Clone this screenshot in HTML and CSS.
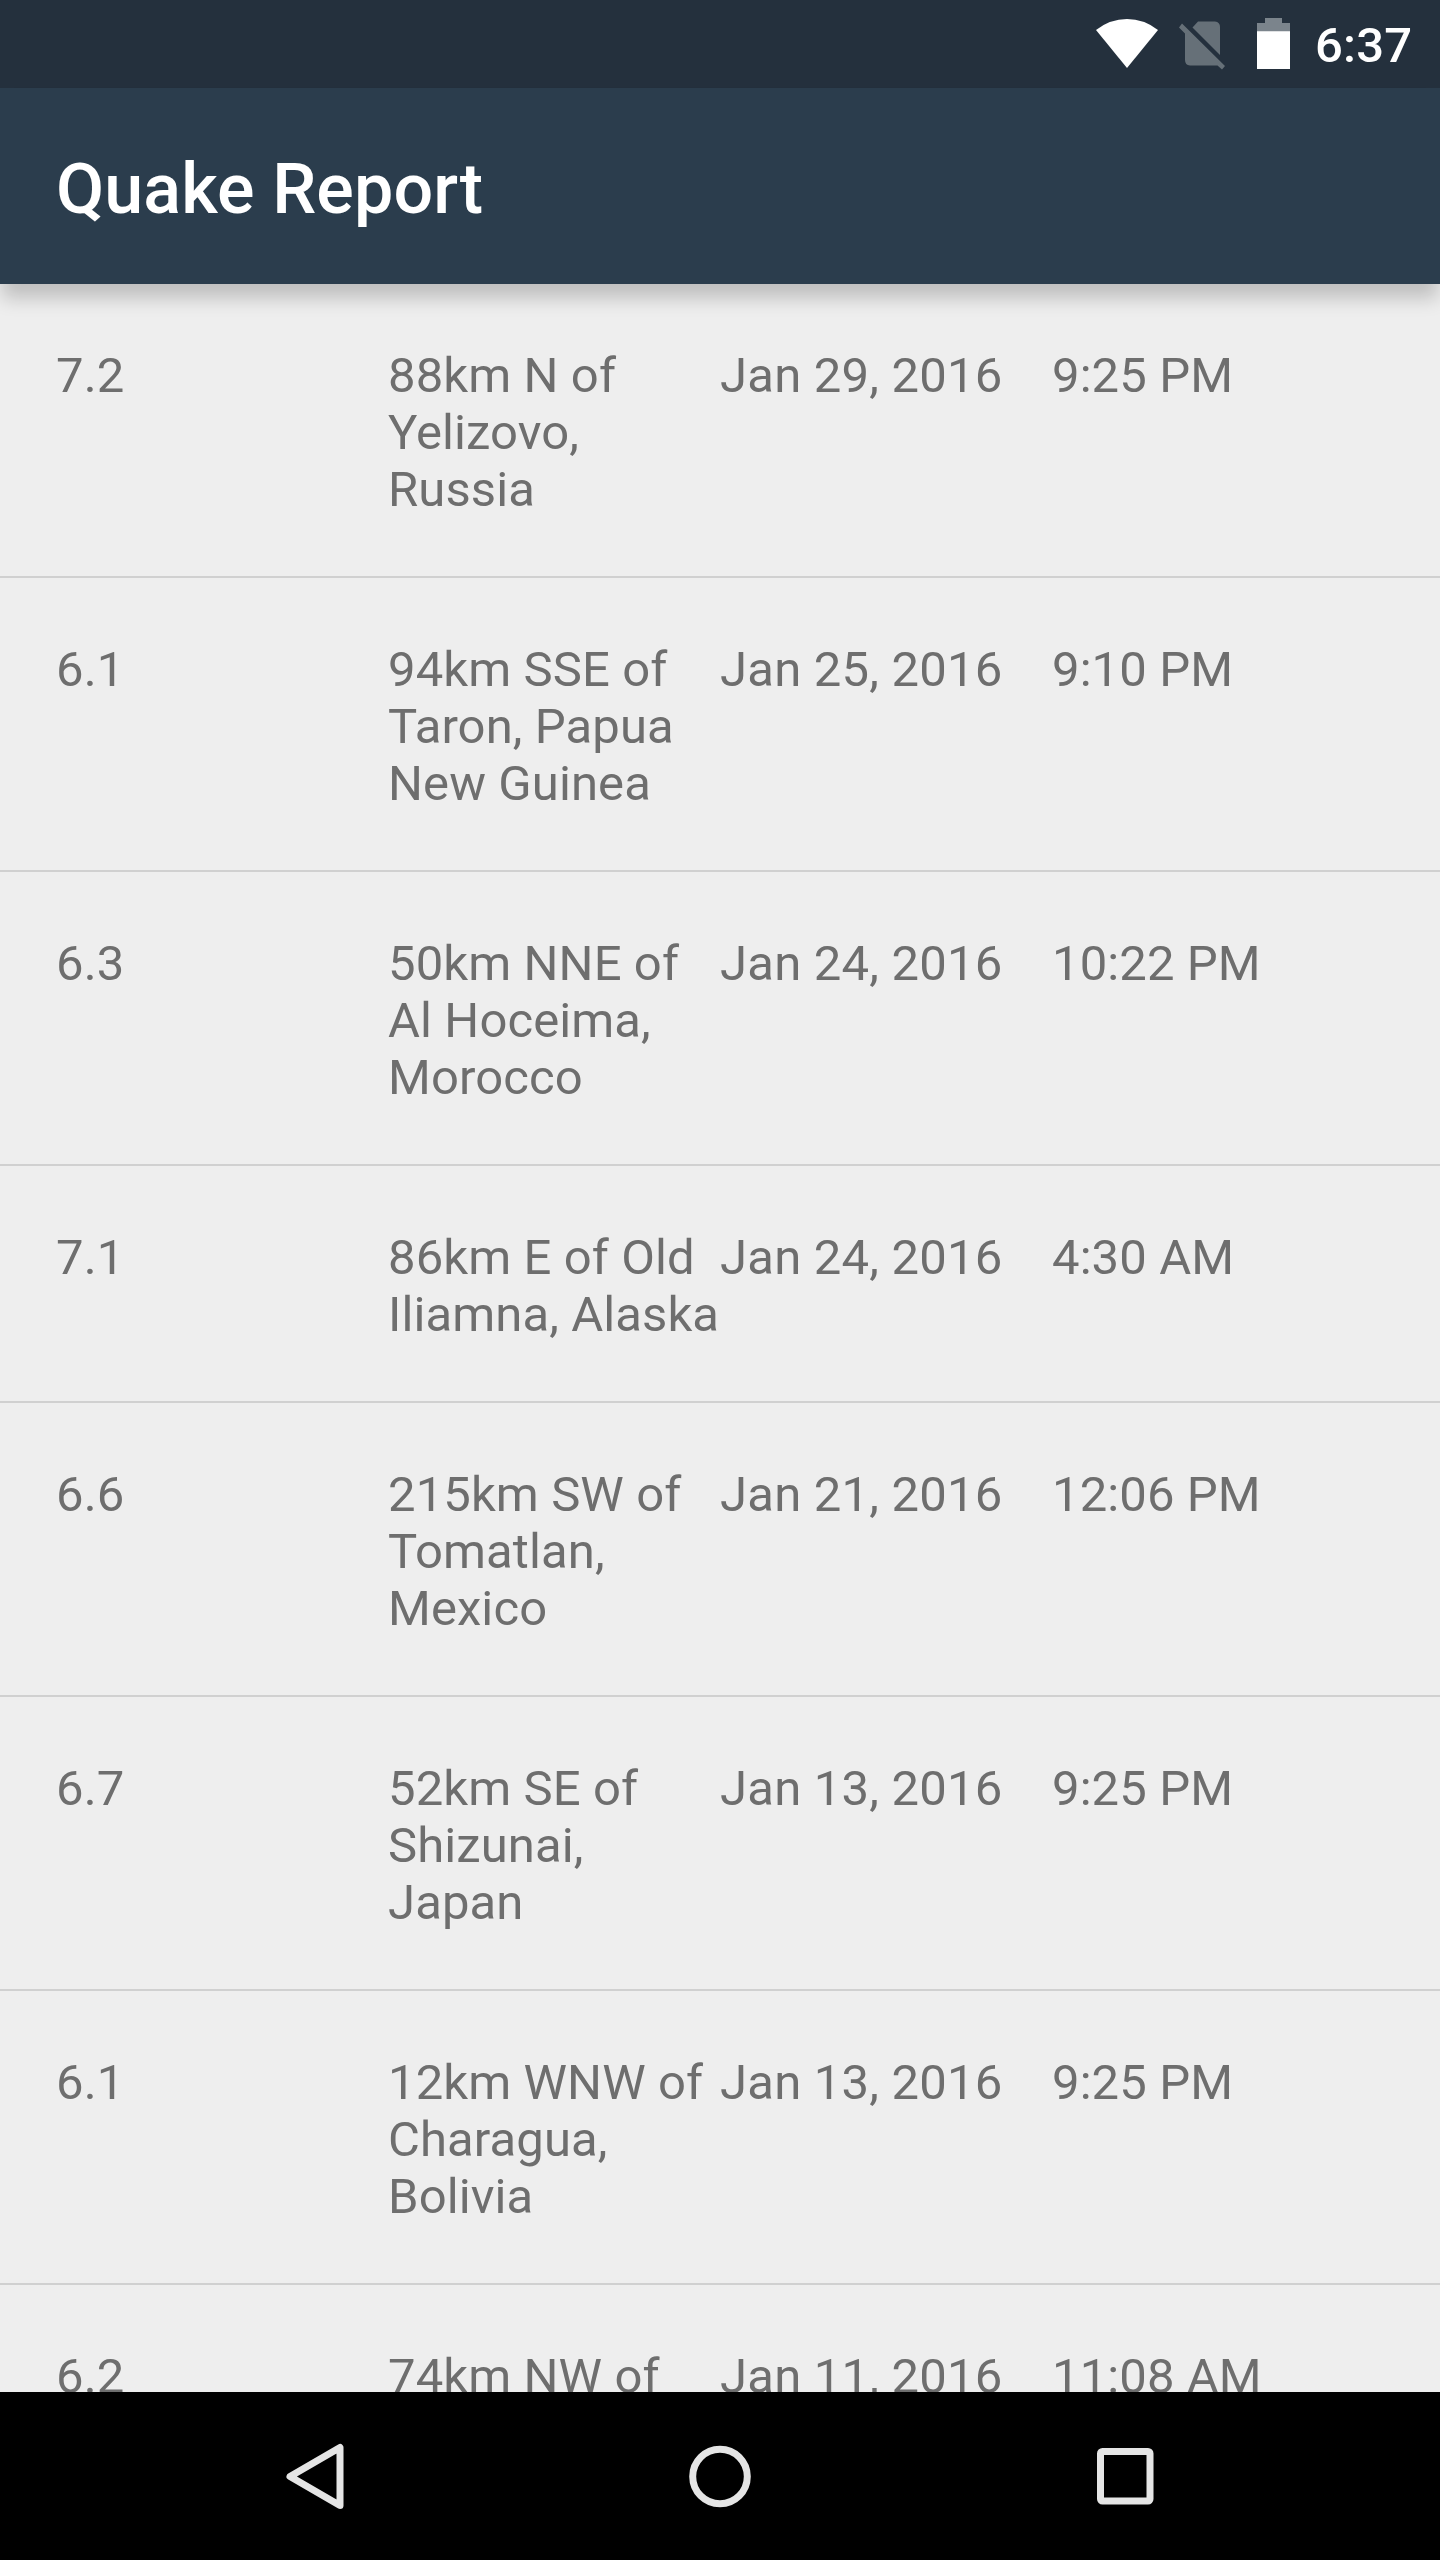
FILE: index.html
```html
<!DOCTYPE html>
<html lang="en">
<head>
<meta charset="utf-8">
<title>Quake Report</title>
<link rel="stylesheet" href="styles.css">
</head>
<body>
<div class="screen">
  <div class="status-bar">
    <svg class="status-icons" width="210" height="88" viewBox="1090 0 210 88">
      <path fill="#fff" d="M1127 68 1096 30Q1110 19 1127 19T1158 30Z"/>
      <g fill="#667078">
        <path d="M1192.5 27.5 1198 21.5H1215Q1220 22 1220 27V55Z"/>
        <path d="M1182 23.5 1225 66 1222 69.5 1217.5 65.5H1190Q1185 65 1185 60V33.500L1179 27.500Z"/>
      </g>
      <path fill="#7b848c" d="M1265 18H1282V23H1290V32H1257V23H1265Z"/>
      <path fill="#fff" d="M1257 31.300H1290V69H1257Z"/>
    </svg>
    <span class="clock">6:37</span>
  </div>
  <header class="app-bar"><h1 class="title">Quake Report</h1></header>
  <main class="list">
    <div class="row"><span>7.2</span><span>88km N of Yelizovo, Russia</span><span class="date">Jan 29, 2016</span><span>9:25 PM</span></div>
    <div class="row"><span>6.1</span><span>94km SSE of Taron, Papua New Guinea</span><span class="date">Jan 25, 2016</span><span>9:10 PM</span></div>
    <div class="row"><span>6.3</span><span>50km NNE of Al Hoceima, Morocco</span><span class="date">Jan 24, 2016</span><span>10:22 PM</span></div>
    <div class="row"><span>7.1</span><span>86km E of Old Iliamna, Alaska</span><span class="date">Jan 24, 2016</span><span>4:30 AM</span></div>
    <div class="row"><span>6.6</span><span>215km SW of Tomatlan, Mexico</span><span class="date">Jan 21, 2016</span><span>12:06 PM</span></div>
    <div class="row"><span>6.7</span><span>52km SE of Shizunai, Japan</span><span class="date">Jan 13, 2016</span><span>9:25 PM</span></div>
    <div class="row"><span>6.1</span><span>12km WNW of Charagua, Bolivia</span><span class="date">Jan 13, 2016</span><span>9:25 PM</span></div>
    <div class="row"><span>6.2</span><span>74km NW of</span><span class="date">Jan 11, 2016</span><span>11:08 AM</span></div>
  </main>
  <nav class="nav-bar">
    <svg width="72" height="72" viewBox="0 0 72 72"><path d="M61 7.500V65.500L11 36.500Z"/></svg>
    <svg width="72" height="72" viewBox="0 0 72 72"><circle cx="36" cy="36.500" r="27.300"/></svg>
    <svg width="72" height="72" viewBox="0 0 72 72"><rect x="11.500" y="11.500" width="49.500" height="49.500" rx="2"/></svg>
  </nav>
</div>
</body>
</html>
```
FILE: styles.css
```css
body {
  margin: 0;
  font-family: Roboto, sans-serif;
}

.screen {
  width: 1440px;
  height: 2560px;
  display: flex;
  flex-direction: column;
  overflow: hidden;
  background: #eee;
}

.status-bar {
  flex: none;
  height: 88px;
  display: flex;
  justify-content: flex-end;
  background: #24303d;
  color: #fff;
}

.clock {
  width: 125px;
  margin-left: 15px;
  font-size: 49px;
  font-weight: 500;
  letter-spacing: .2px;
  line-height: 92px;
}

.app-bar {
  flex: none;
  z-index: 1;
  box-sizing: border-box;
  height: 196px;
  padding: 0 56px;
  background: #2b3d4d;
  box-shadow: 0 16px 18px -2px rgba(0, 0, 0, .2);
}

.title {
  margin: 0;
  color: #fff;
  font-size: 70px;
  font-weight: 500;
  letter-spacing: .1px;
  line-height: 202px;
}

.list {
  flex: 1;
  min-height: 0;
  overflow: hidden;
}

.row {
  display: grid;
  grid-template-columns: repeat(4, 332px);
  padding: 63px 56px 58px;
  border-bottom: 2px solid #d0d0d0;
  color: #6e6e6e;
  font-size: 49px;
  letter-spacing: .1px;
  line-height: 57px;
}

.date {
  letter-spacing: .22px;
}

.nav-bar {
  flex: none;
  height: 168px;
  display: flex;
  justify-content: center;
  align-items: center;
  gap: 333px;
  background: #000;
}

.nav-bar svg {
  fill: none;
  stroke: #e5e5e5;
  stroke-width: 7;
  stroke-linejoin: round;
}
```
